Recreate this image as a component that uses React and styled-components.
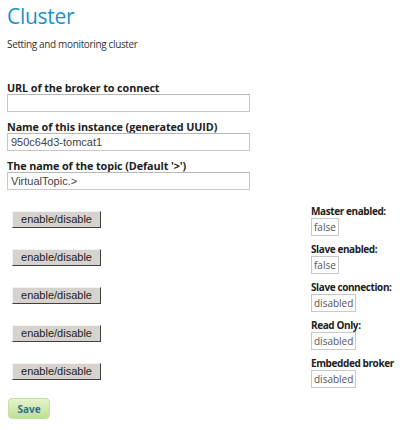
import React from "react";
import styled, { createGlobalStyle } from "styled-components";

const GlobalStyle = createGlobalStyle`
  html, body {
    margin: 0;
    padding: 0;
    background: #fff;
  }
  body {
    font-family: "Open Sans", "DejaVu Sans", sans-serif;
    color: #333;
  }
`;

const Page = styled.div`
  width: 400px;
  height: 430px;
  padding: 0 0 0 7px;
  box-sizing: border-box;
  overflow: hidden;
`;

const Title = styled.h1`
  margin: 0;
  padding-top: 3px;
  font-family: "Open Sans", sans-serif;
  font-weight: 400;
  font-size: 21px;
  line-height: 26px;
  color: #1e8fc9;
  letter-spacing: -0.3px;
`;

const Subtitle = styled.p`
  margin: 8px 0 0;
  font-size: 10px;
  line-height: 14px;
  color: #333;
  letter-spacing: -0.35px;
`;

const Form = styled.div`
  margin-top: 30px;
  display: flex;
  flex-direction: column;
  gap: 8px;
`;

const Field = styled.div`
  display: flex;
  flex-direction: column;
`;

const Label = styled.label`
  font-family: "Open Sans", sans-serif;
  font-weight: 700;
  font-size: 10.8px;
  line-height: 13px;
  color: #222;
  letter-spacing: -0.1px;
`;

const TextInput = styled.input`
  width: 243px;
  height: 18px;
  box-sizing: border-box;
  margin: 0;
  padding: 0 3px;
  border: 1px solid #c8c8c8;
  border-top-color: #b8b8b8;
  font-family: "Liberation Sans", Arial, sans-serif;
  font-size: 11px;
  color: #444;
  outline: none;
`;

const Controls = styled.div`
  margin-top: 15px;
  display: flex;
  flex-direction: column;
`;

const Row = styled.div`
  height: 38px;
  display: flex;
  align-items: flex-start;
  justify-content: space-between;
`;

const ToggleButton = styled.button`
  margin: 6px 0 0 5px;
  width: 89px;
  height: 17px;
  padding: 0;
  box-sizing: border-box;
  background: #d6d3ce;
  border: 1px solid;
  border-color: #f4f3f1 #404040 #404040 #f4f3f1;
  font-family: "Liberation Sans", Arial, sans-serif;
  font-size: 11px;
  color: #222;
  line-height: 15px;
  cursor: pointer;
`;

const Status = styled.div`
  width: 89px;
  display: flex;
  flex-direction: column;
  align-items: flex-start;
`;

const StatusLabel = styled.span`
  font-family: "Open Sans", sans-serif;
  font-weight: 700;
  font-size: 10px;
  line-height: 13px;
  color: #222;
  letter-spacing: -0.4px;
`;

const StatusBox = styled.span`
  box-sizing: border-box;
  height: 18px;
  padding: 0 2px;
  border: 1px solid #c8c8c8;
  font-family: "Open Sans", sans-serif;
  font-size: 10px;
  line-height: 16px;
  color: #555;
`;

const SaveButton = styled.button`
  margin: 3px 0 0 1px;
  width: 42px;
  height: 21px;
  padding: 0;
  border: 1px solid #c4e0a4;
  border-radius: 4px;
  background: linear-gradient(#e4f4cc, #bfe092);
  font-family: "Open Sans", sans-serif;
  font-weight: 700;
  font-size: 10px;
  color: #2f6f9a;
  cursor: pointer;
`;

const fields = [
  { label: "URL of the broker to connect", value: "" },
  { label: "Name of this instance (generated UUID)", value: "950c64d3-tomcat1" },
  { label: "The name of the topic (Default '>')", value: "VirtualTopic.>" },
];

const statuses = [
  { label: "Master enabled:", value: "false" },
  { label: "Slave enabled:", value: "false" },
  { label: "Slave connection:", value: "disabled" },
  { label: "Read Only:", value: "disabled" },
  { label: "Embedded broker", value: "disabled" },
];

export default function App() {
  return (
    <Page>
      <GlobalStyle />
      <Title>Cluster</Title>
      <Subtitle>Setting and monitoring cluster</Subtitle>
      <Form>
        {fields.map((f) => (
          <Field key={f.label}>
            <Label>{f.label}</Label>
            <TextInput defaultValue={f.value} />
          </Field>
        ))}
      </Form>
      <Controls>
        {statuses.map((s) => (
          <Row key={s.label}>
            <ToggleButton>enable/disable</ToggleButton>
            <Status>
              <StatusLabel>{s.label}</StatusLabel>
              <StatusBox>{s.value}</StatusBox>
            </Status>
          </Row>
        ))}
      </Controls>
      <SaveButton>Save</SaveButton>
    </Page>
  );
}
